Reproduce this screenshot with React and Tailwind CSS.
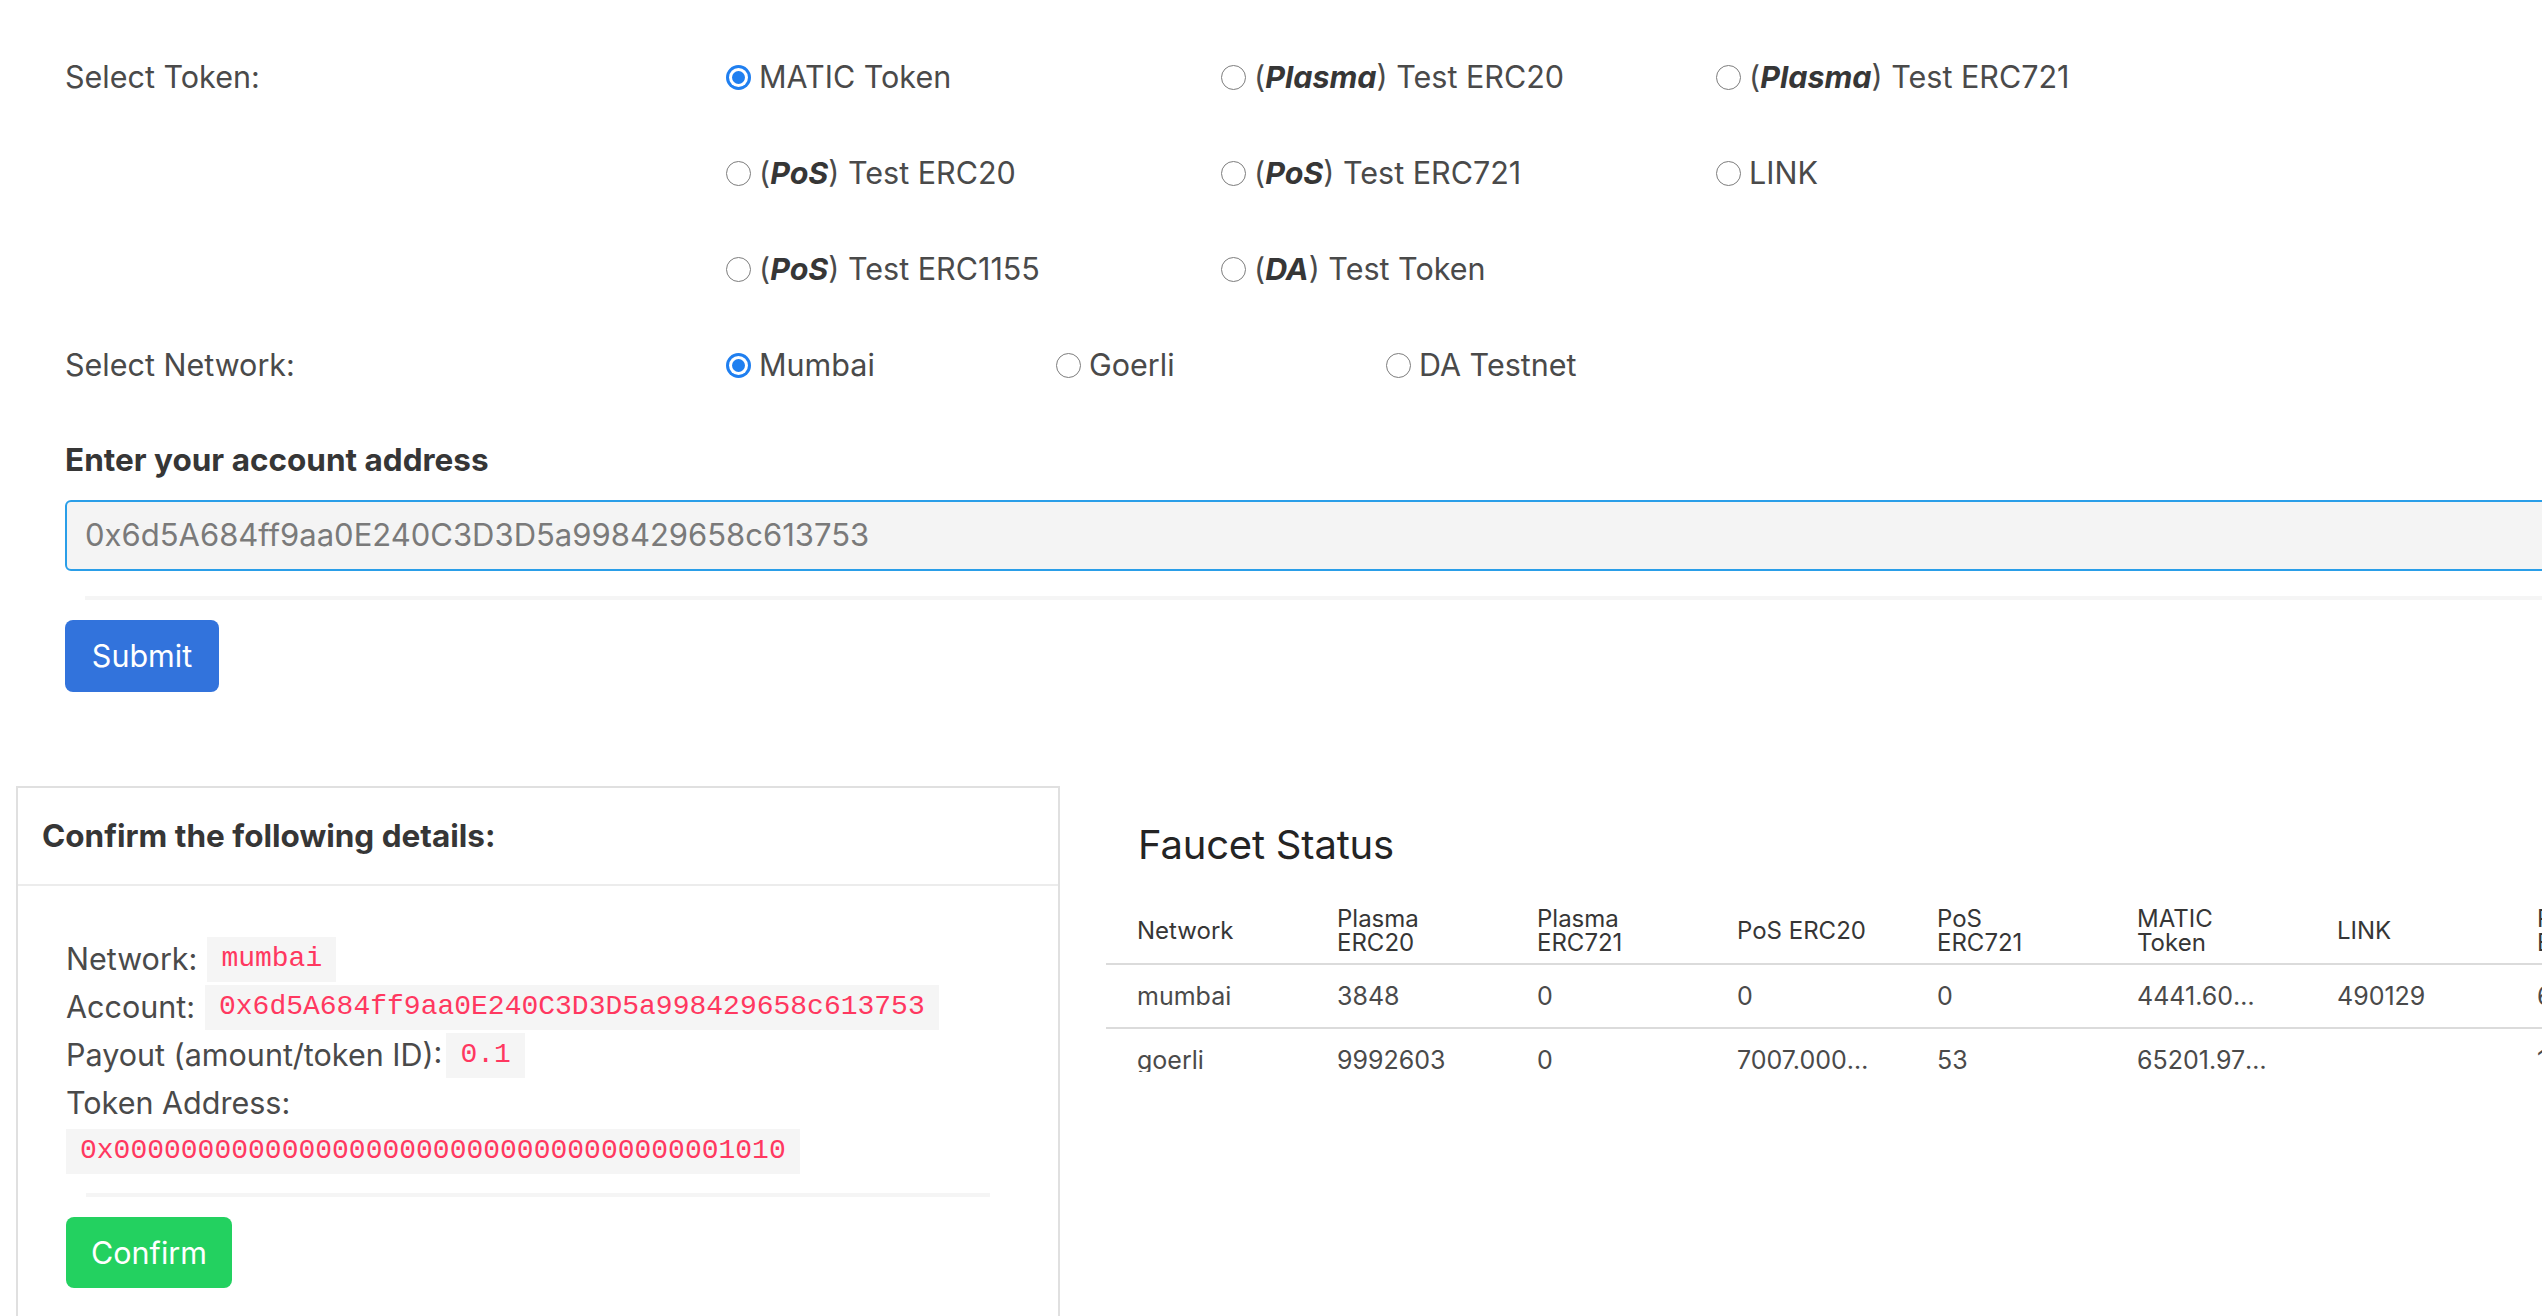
import React from 'react';

const tokens = [
  { tag: null, name: 'MATIC Token', checked: true },
  { tag: 'Plasma', name: 'Test ERC20' },
  { tag: 'Plasma', name: 'Test ERC721' },
  { tag: 'PoS', name: 'Test ERC20' },
  { tag: 'PoS', name: 'Test ERC721' },
  { tag: null, name: 'LINK' },
  { tag: 'PoS', name: 'Test ERC1155' },
  { tag: 'DA', name: 'Test Token' },
];

const networks = [
  { name: 'Mumbai', checked: true },
  { name: 'Goerli' },
  { name: 'DA Testnet' },
];

const columns = ['Network', 'Plasma ERC20', 'Plasma ERC721', 'PoS ERC20', 'PoS ERC721', 'MATIC Token', 'LINK', 'PoS ERC1155', 'DA Test Token'];

const rows = [
  ['mumbai', '3848', '0', '0', '0', '4441.6034125', '490129', '6', '0'],
  ['goerli', '9992603', '0', '7007.0000001', '53', '65201.97125', '', '1', '0'],
];

const Radio = ({ checked }) =>
  checked ? (
    <span className="flex h-[25px] w-[25px] shrink-0 items-center justify-center rounded-full bg-[#1f7ff0]">
      <span className="flex h-[19px] w-[19px] items-center justify-center rounded-full bg-white">
        <span className="h-[13px] w-[13px] rounded-full bg-[#1f7ff0]" />
      </span>
    </span>
  ) : (
    <span className="h-[25px] w-[25px] shrink-0 rounded-full border-[1.5px] border-[#7d7d7d] bg-white" />
  );

const Option = ({ tag, name, checked }) => (
  <div className="flex h-[48px] items-center gap-[8px]">
    <Radio checked={checked} />
    <span>
      {tag && (
        <>
          (<strong className="italic text-[#363636]">{tag}</strong>){' '}
        </>
      )}
      {name}
    </span>
  </div>
);

const Code = ({ children, className = '' }) => (
  <code className={`flex h-[45px] items-center bg-[#f5f5f5] px-[14px] font-['Liberation_Mono',monospace] text-[28px] text-[#ff3860] ${className}`}>
    {children}
  </code>
);

export default function App() {
  return (
    <div className="h-[1316px] w-[2542px] overflow-hidden bg-white font-['Inter',sans-serif] text-[30.5px] text-[#4a4a4a]">
      {/* Form */}
      <div className="w-[2700px] pl-[65px] pt-[53px]">
        <div className="flex">
          <div className="w-[661px] shrink-0 leading-[48px]">Select Token:</div>
          <div className="grid w-[1485px] grid-cols-3 gap-y-[48px]">
            {tokens.map((t, i) => (
              <Option key={i} {...t} />
            ))}
          </div>
        </div>
        <div className="mt-[48px] flex">
          <div className="w-[661px] shrink-0 leading-[48px]">Select Network:</div>
          <div className="grid w-[990px] grid-cols-3">
            {networks.map((n, i) => (
              <Option key={i} {...n} />
            ))}
          </div>
        </div>

        <div className="mt-[47px] text-[31.5px] font-bold leading-[48px] text-[#363636]">Enter your account address</div>
        <div className="mt-[16px] flex h-[71px] w-[2600px] items-center rounded-[6px] border-2 border-[#2a9ee8] bg-[#f4f4f4] pl-[18px] text-[31px] text-[#7a7a7a]">
          0x6d5A684ff9aa0E240C3D3D5a998429658c613753
        </div>
        <div className="ml-[20px] mt-[25px] h-[4px] w-[2580px] bg-[#f5f5f5]" />
        <button className="mt-[20px] h-[72px] w-[154px] rounded-[8px] bg-[#3273dc] text-white">Submit</button>
      </div>

      {/* Confirm + status */}
      <div className="mt-[94px] flex items-start">
        <div className="ml-[16px] h-[700px] w-[1044px] shrink-0 border-2 border-[#e0e0e0]">
          <div className="flex h-[98px] items-center border-b-2 border-[#ececec] pl-[24px] text-[31.5px] font-bold text-[#363636]">
            Confirm the following details:
          </div>
          <div className="px-[48px] pt-[49px]">
            <div className="flex h-[48px] items-center">
              Network:<Code className="ml-[10px]">mumbai</Code>
            </div>
            <div className="flex h-[48px] items-center">
              Account:<Code className="ml-[10px]">0x6d5A684ff9aa0E240C3D3D5a998429658c613753</Code>
            </div>
            <div className="flex h-[48px] items-center">
              Payout (amount/token ID):<Code className="ml-[4px]">0.1</Code>
            </div>
            <div className="flex h-[48px] items-center">Token Address:</div>
            <div className="flex h-[48px] items-center">
              <Code>0x0000000000000000000000000000000000001010</Code>
            </div>
            <div className="mx-[20px] mt-[18px] h-[4px] bg-[#f5f5f5]" />
            <button className="mt-[20px] h-[71px] w-[166px] rounded-[8px] bg-[#23d160] text-white">Confirm</button>
          </div>
        </div>

        <div className="w-[1900px] shrink-0 pl-[46px]">
          <h2 className="mt-[34px] pl-[32px] text-[40px] leading-[49px] tracking-[-0.005em] text-[#242424]">Faucet Status</h2>
          <div className="mt-[30px] text-[25px] leading-[24px]">
            <div className="flex border-b-2 border-[#dbdbdb] text-[#363636]">
              {columns.map((c) => (
                <div key={c} className="flex h-[64px] w-[200px] shrink-0 items-center pl-[31px] pr-[33px] text-[24px]">
                  {c}
                </div>
              ))}
            </div>
            {rows.map((r, i) => (
              <div key={i} className={`flex ${i === 0 ? 'border-b-2 border-[#dbdbdb]' : ''}`}>
                {r.map((v, j) => (
                  <div key={j} className="flex h-[62px] w-[200px] shrink-0 items-center pl-[31px] pr-[36px]">
                    <span className="truncate">{v}</span>
                  </div>
                ))}
              </div>
            ))}
          </div>
        </div>
      </div>
    </div>
  );
}
